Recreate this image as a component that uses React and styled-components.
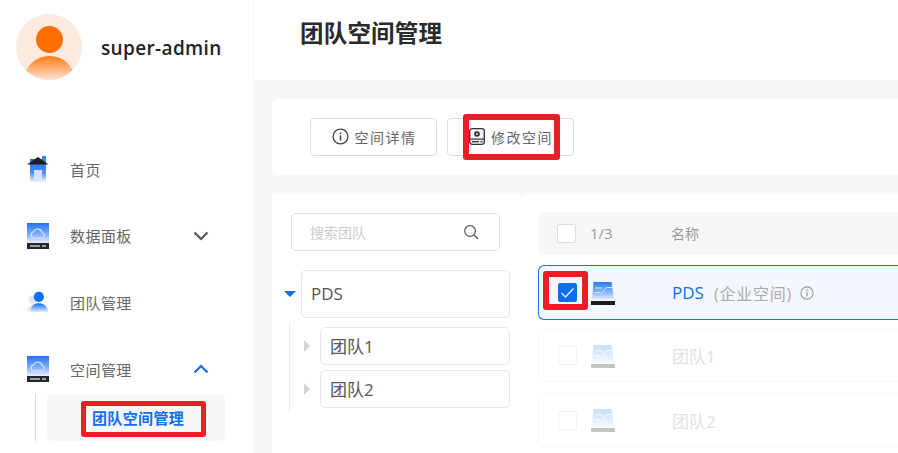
import React from 'react';
import styled, { createGlobalStyle } from 'styled-components';

const Global = createGlobalStyle`
  html, body { margin: 0; padding: 0; background: #f8f8f8; overflow: hidden; }
  body { font-family: "Open Sans", "Noto Sans CJK SC", sans-serif; }
  * { box-sizing: border-box; }
`;
const Page = styled.div`display: flex; width: 898px; height: 453px; overflow: hidden;`;
const Sidebar = styled.aside`width: 254px; flex: none; background: #fff; padding: 14px 0 0 16px; border-right: 1px solid #f6f6f6;`;
const Profile = styled.div`display: flex; align-items: center; gap: 19px; height: 66px;`;
const ProfileName = styled.span`font-size: 19px; font-weight: 600; color: #222; letter-spacing: .35px; margin: 2px 0 0 0;`;
const AvatarSvg = styled.svg`flex: none;`;
const Menu = styled.nav`display: flex; flex-direction: column; margin: 56px 0 0 11px;`;
const MenuItem = styled.div`display: flex; align-items: center; height: 66.6px; width: 182px;`;
const MenuIcon = styled.span`width: 22px; height: 28px; flex: none; display: flex; align-items: center;`;
const MenuLabel = styled.span`margin-left: 21px; font-size: 15px; color: #666; flex: 1; letter-spacing: .45px;`;
const SubWrap = styled.div`position: relative; margin: -8.4px 0 0 0; width: 198px; height: 47px;`;
const SubLine = styled.div`position: absolute; left: 8px; top: 0; bottom: 0; width: 1px; background: #d8d8d8;`;
const SubItem = styled.div`margin-left: 20px; width: 178px; height: 47px; background: #f7f7f7; border-radius: 6px; display: flex; align-items: center; padding-left: 45px; font-size: 15px; font-weight: 700; letter-spacing: .35px; color: #0f6fee;`;
const Highlight = styled.span`position: absolute; left: ${p => p.$l}px; top: ${p => p.$t}px; width: ${p => p.$w}px; height: ${p => p.$h}px; border: ${p => p.$b}px solid #ee1c25; border-radius: 3px; pointer-events: none;`;

const Main = styled.main`flex: 1; min-width: 0; display: flex; flex-direction: column;`;
const Header = styled.header`height: 80px; background: #fff; padding: 15px 0 0 46px; flex: none;`;
const Title = styled.h1`margin: 0; font-size: 23.5px; line-height: 36px; font-weight: 700; color: #2a2a2a; letter-spacing: .2px;`;
const Body = styled.div`flex: 1; padding: 19px 0 0 18px; display: flex; flex-direction: column; gap: 19px;`;
const Toolbar = styled.div`height: 76px; background: #fff; border-radius: 6px 0 0 6px; display: flex; align-items: center; gap: 10px; padding: 0 0 1px 38px; flex: none;`;
const ToolButton = styled.div`position: relative; width: 127px; height: 38px; border: 1px solid #dcdcdc; border-radius: 4px; display: flex; align-items: center; justify-content: center; gap: 6px; padding-left: 1px; font-size: 14px; letter-spacing: 1.5px; color: #666; background: #fff;`;
const Columns = styled.div`display: flex; flex: 1; min-height: 0;`;
const TreePanel = styled.section`width: 248px; flex: none; background: #fff; padding: 19px 10px 0 19px;`;
const SearchBox = styled.div`height: 38px; width: 209px; border: 1px solid #dedede; border-radius: 5px; display: flex; align-items: center; justify-content: space-between; padding: 0 20px 1px 18px; font-size: 14px; color: #ccc;`;
const Tree = styled.div`position: relative; margin-top: 19px;`;
const TreeRow = styled.div`display: flex; align-items: center;`;
const Caret = styled.span`width: 0; height: 0; flex: none; ${p => p.$open
  ? 'border-left: 6px solid transparent; border-right: 6px solid transparent; border-top: 6px solid #0f6fee; margin: 0 5px 0 -7px;'
  : 'border-top: 6px solid transparent; border-bottom: 6px solid transparent; border-left: 6px solid #d4d4d4; margin: 0 10px 0 13px;'}`;
const TreeNode = styled.div`flex: 1; height: ${p => p.$h}px; border: 1px solid #e8e8e8; border-radius: 5px; display: flex; align-items: center; padding: 0 0 1px 9px; font-size: 17px; color: #555;`;
const Children = styled.div`position: relative; display: flex; flex-direction: column; gap: 5px; margin-top: 9px;`;
const TreeLine = styled.div`position: absolute; left: -2px; top: -5px; height: 91px; width: 1px; background: #ececec;`;
const TablePanel = styled.section`flex: 1; background: #fff; border-radius: 6px 0 0 0; padding: 18px 0 0 18px; min-width: 0;`;
const HeadRow = styled.div`height: 43px; background: #f7f7f7; border-radius: 6px 0 0 6px; display: flex; align-items: center; padding: 0 0 1px 19px; font-size: 14px; color: #999;`;
const Box = styled.span`position: relative; flex: none; width: 19px; height: 19px; border-radius: 2px; border: 1px solid ${p => p.$line || '#dcdcdc'}; background: ${p => p.$bg || '#fff'}; display: flex; align-items: center; justify-content: center;`;
const Count = styled.span`margin-left: 14px; width: 81px; font-size: 15px;`;
const Row = styled.div`position: relative; height: ${p => p.$h}px; margin-top: ${p => p.$mt}px; border: 1px solid ${p => p.$active ? '#1570ef' : '#f7f7f7'}; border-right: none; border-radius: 6px 0 0 6px; background: ${p => p.$active ? '#f4f7fe' : '#fff'}; display: flex; align-items: center; padding-left: 19px; font-size: 17px;`;
const Disk = styled.span`display: flex; margin-left: 14px; width: 24px; flex: none; opacity: ${p => p.$faded ? 0.25 : 1};`;
const RowName = styled.span`margin-left: 57px; color: ${p => p.$active ? '#0f6fee' : '#e2e2e2'};`;
const RowTag = styled.span`margin-left: 10px; color: #aaa; font-size: 16px; letter-spacing: .8px;`;
const RowInfo = styled.span`display: flex; margin-left: 8px;`;

const Avatar = () => (
  <AvatarSvg width="66" height="66" viewBox="0 0 66 66">
    <defs>
      <linearGradient id="ab" x1="0" y1="0" x2="0" y2="1"><stop offset="0" stopColor="#ff7a14" /><stop offset=".55" stopColor="#fdeadf" /></linearGradient>
      <clipPath id="ac"><circle cx="33" cy="33" r="33" /></clipPath>
    </defs>
    <circle cx="33" cy="33" r="33" fill="#fdeadf" />
    <circle cx="33.500" cy="25.500" r="13.500" fill="#ff6f00" />
    <g clipPath="url(#ac)"><ellipse cx="33.500" cy="65" rx="25" ry="23" fill="url(#ab)" /></g>
  </AvatarSvg>
);
const HomeIcon = () => (
  <svg width="22" height="26" viewBox="0 0 22 26">
    <defs><linearGradient id="hg" x1="0" y1="0" x2="0" y2="1"><stop offset="0" stopColor="#1f6ef6" /><stop offset=".6" stopColor="#4d8ff8" /><stop offset="1" stopColor="#f0f5ff" /></linearGradient></defs>
    <rect x="3" y="3" width="16" height="23" fill="url(#hg)" />
    <rect x="15" y="0" width="4" height="7" fill="#3b84f7" />
    <rect x="7" y="14" width="8" height="10" fill="#d5e2fb" />
    <path d="M0 8.500 L11 1 L21.500 8.500 Z" fill="#1e1e1e" />
  </svg>
);
const ServerIcon = ({ id }) => (
  <svg width="22" height="26" viewBox="0 0 22 26">
    <defs><linearGradient id={id} x1="0" y1="0" x2="0" y2="1"><stop offset="0" stopColor="#2272f5" /><stop offset=".6" stopColor="#86b3f9" /><stop offset="1" stopColor="#e9f1fe" /></linearGradient></defs>
    <rect width="22" height="20" fill={`url(#${id})`} />
    <path d="M7 15 a3.200 3.200 0 0 1 -.3-6.300 a4.500 4.500 0 0 1 8.500 1 a2.700 2.700 0 0 1 0 5.300 Z" fill="none" stroke="#dbe7fd" strokeWidth="1.100" />
    <rect y="20" width="22" height="6" fill="#22272e" />
    <rect x="3" y="22" width="10" height="2" fill="#9a9fa6" />
    <rect x="15" y="22" width="4" height="2" fill="#9a9fa6" />
  </svg>
);
const TeamIcon = () => (
  <svg width="26" height="26" viewBox="0 0 26 26">
    <defs><linearGradient id="tg" x1="0" y1="0" x2="0" y2="1"><stop offset="0" stopColor="#0f6fee" /><stop offset="1" stopColor="#e6effe" /></linearGradient></defs>
    <circle cx="7" cy="10" r="5" fill="#dfe8fb" />
    <path d="M0 24 C1 16 8 15 12 16 V24 Z" fill="#e6edfc" />
    <circle cx="14" cy="7" r="6" fill="#0f6fee" />
    <path d="M3.500 25 C5 16 10 14.500 14 14.500 C19 14.500 24 17 25 25 Z" fill="url(#tg)" />
  </svg>
);
const ChevronSvg = styled.svg`flex: none;`;
const Chevron = ({ up }) => (
  <ChevronSvg width="16" height="16" viewBox="0 0 16 16">
    <path d={up ? 'M1.500 11.500 L8 5 L14.500 11.500' : 'M1.500 4.500 L8 11 L14.500 4.500'} fill="none" stroke={up ? '#0f6fee' : '#555'} strokeWidth="2.200" />
  </ChevronSvg>
);
const InfoIcon = ({ size = 17, color = '#444', w = 1.2 }) => (
  <svg width={size} height={size} viewBox="0 0 16 16">
    <circle cx="8" cy="8" r="7" fill="none" stroke={color} strokeWidth={w} />
    <rect x="7.300" y="4" width="1.400" height="1.500" fill={color} />
    <rect x="7.300" y="6.800" width="1.400" height="5" fill={color} />
  </svg>
);
const EditDiskIcon = () => (
  <svg width="16" height="17" viewBox="0 0 16 17">
    <rect x=".7" y=".7" width="14.600" height="15.600" rx="2.500" fill="#f4f4f4" stroke="#333" strokeWidth="1.300" />
    <circle cx="8" cy="6" r="2.800" fill="#333" />
    <circle cx="8" cy="6" r=".9" fill="#fff" />
    <rect x="1" y="10.500" width="14" height="1.200" fill="#333" />
    <rect x="3" y="13" width="7" height="1.300" fill="#333" />
    <rect x="11.500" y="13" width="2" height="1.300" fill="#333" />
  </svg>
);
const SearchIcon = () => (
  <svg width="16" height="16" viewBox="0 0 17 17">
    <circle cx="7.500" cy="7.500" r="5.700" fill="none" stroke="#555" strokeWidth="1.300" />
    <path d="M11.500 11.500 L15.800 15.800" stroke="#555" strokeWidth="1.500" />
  </svg>
);
const DiskIcon = ({ id }) => (
  <svg width="24" height="24" viewBox="0 0 24 24">
    <defs><linearGradient id={id} x1="0" y1="0" x2="0" y2="1"><stop offset="0" stopColor="#2a7bf0" /><stop offset=".6" stopColor="#8bb8f8" /><stop offset="1" stopColor="#eef4fe" /></linearGradient></defs>
    <path d="M2.500 1 H20.500 L23 19 H1 Z" fill={`url(#${id})`} />
    <path d="M4 7 H11 M3.500 11.500 H9 M9.500 12.500 C13 12.500 13 6.500 16.500 6.500 H21" fill="none" stroke="#dce9fd" strokeWidth="1" />
    <rect y="20" width="24" height="4" fill="#1b1b1b" />
  </svg>
);
const Check = () => (
  <svg width="15" height="12" viewBox="0 0 15 12"><path d="M1.500 6 L5.500 10 L13.500 1.500" fill="none" stroke="#fff" strokeWidth="1.100" /></svg>
);

export default function App() {
  return (
    <Page>
      <Global />
      <Sidebar>
        <Profile>
          <Avatar />
          <ProfileName>super-admin</ProfileName>
        </Profile>
        <Menu>
          <MenuItem><MenuIcon><HomeIcon /></MenuIcon><MenuLabel>首页</MenuLabel></MenuItem>
          <MenuItem><MenuIcon><ServerIcon id="s1" /></MenuIcon><MenuLabel>数据面板</MenuLabel><Chevron /></MenuItem>
          <MenuItem><MenuIcon><TeamIcon /></MenuIcon><MenuLabel>团队管理</MenuLabel></MenuItem>
          <MenuItem><MenuIcon><ServerIcon id="s2" /></MenuIcon><MenuLabel>空间管理</MenuLabel><Chevron up /></MenuItem>
          <SubWrap>
            <SubLine />
            <SubItem>团队空间管理</SubItem>
            <Highlight $l={54} $t={7} $w={125} $h={36} $b={5} />
          </SubWrap>
        </Menu>
      </Sidebar>
      <Main>
        <Header><Title>团队空间管理</Title></Header>
        <Body>
          <Toolbar>
            <ToolButton><InfoIcon />空间详情</ToolButton>
            <ToolButton>
              <EditDiskIcon />修改空间
              <Highlight $l={15} $t={-5} $w={97} $h={46} $b={6} />
            </ToolButton>
          </Toolbar>
          <Columns>
            <TreePanel>
              <SearchBox>搜索团队<SearchIcon /></SearchBox>
              <Tree>
                <TreeRow>
                  <Caret $open />
                  <TreeNode $h={48}>PDS</TreeNode>
                </TreeRow>
                <Children>
                  <TreeLine />
                  <TreeRow><Caret /><TreeNode $h={38}>团队1</TreeNode></TreeRow>
                  <TreeRow><Caret /><TreeNode $h={38}>团队2</TreeNode></TreeRow>
                </Children>
              </Tree>
            </TreePanel>
            <TablePanel>
              <HeadRow>
                <Box />
                <Count>1/3</Count>
                名称
              </HeadRow>
              <Row $active $h={55} $mt={10}>
                <Box $bg="#0f6fee" $line="#0f6fee"><Check /></Box>
                <Disk><DiskIcon id="d1" /></Disk>
                <RowName $active>PDS</RowName>
                <RowTag>(企业空间)</RowTag>
                <RowInfo><InfoIcon size={14} color="#999" /></RowInfo>
                <Highlight $l={4} $t={5} $w={45} $h={39} $b={6} />
              </Row>
              <Row $h={53} $mt={9}>
                <Box $line="#f2f2f2" />
                <Disk $faded><DiskIcon id="d2" /></Disk>
                <RowName>团队1</RowName>
              </Row>
              <Row $h={54} $mt={11}>
                <Box $line="#f2f2f2" />
                <Disk $faded><DiskIcon id="d3" /></Disk>
                <RowName>团队2</RowName>
              </Row>
            </TablePanel>
          </Columns>
        </Body>
      </Main>
    </Page>
  );
}
